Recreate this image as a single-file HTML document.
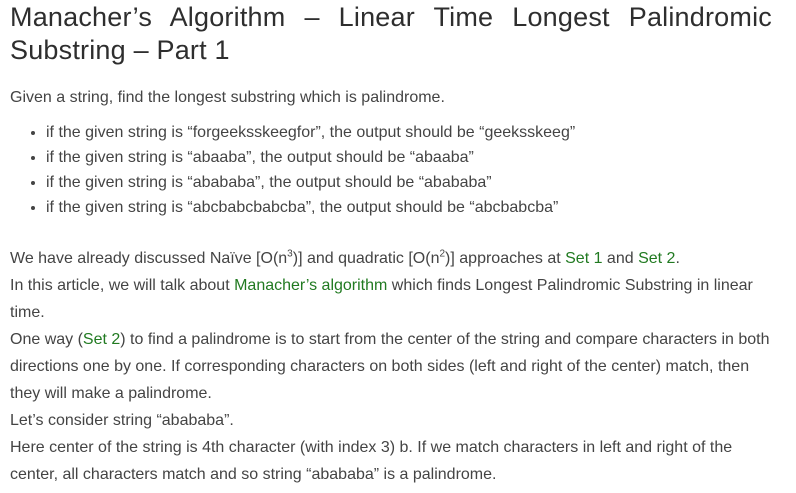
<!DOCTYPE html>
<html><head><meta charset="utf-8"><style>
body{margin:0;background:#fff;width:796px;height:493px;overflow:hidden;font-family:"Liberation Sans",Arial,sans-serif;color:#444}
h1{position:absolute;left:10px;top:1px;width:762px;margin:0;font-weight:normal;font-size:27px;line-height:33px;text-align:justify;color:#2e2e2e;letter-spacing:0.2px}
.p{position:absolute;left:10px;font-size:16px;white-space:nowrap}
ul{position:absolute;left:0;top:120px;margin:0;padding-left:46px;font-size:16px;line-height:25px}
a{color:#217a21;text-decoration:none}
sup{font-size:10px;line-height:0}
.b{position:absolute;left:10px;top:245px;font-size:16px;line-height:27px;width:790px;white-space:nowrap}
</style></head><body>
<h1>Manacher’s Algorithm – Linear Time Longest Palindromic Substring – Part 1</h1>
<div class="p" style="top:89px">Given a string, find the longest substring which is palindrome.</div>
<ul>
<li>if the given string is “forgeeksskeegfor”, the output should be “geeksskeeg”</li>
<li>if the given string is “abaaba”, the output should be “abaaba”</li>
<li>if the given string is “abababa”, the output should be “abababa”</li>
<li>if the given string is “abcbabcbabcba”, the output should be “abcbabcba”</li>
</ul>
<div class="b">We have already discussed Naïve [O(n<sup>3</sup>)] and quadratic [O(n<sup>2</sup>)] approaches at <a>Set 1</a> and <a>Set 2</a>.<br>
In this article, we will talk about <a>Manacher’s algorithm</a> which finds Longest Palindromic Substring in linear<br>time.<br>
One way (<a>Set 2</a>) to find a palindrome is to start from the center of the string and compare characters in both<br>directions one by one. If corresponding characters on both sides (left and right of the center) match, then<br>they will make a palindrome.<br>
Let’s consider string “abababa”.<br>
Here center of the string is 4th character (with index 3) b. If we match characters in left and right of the<br>center, all characters match and so string “abababa” is a palindrome.</div>
</body></html>
